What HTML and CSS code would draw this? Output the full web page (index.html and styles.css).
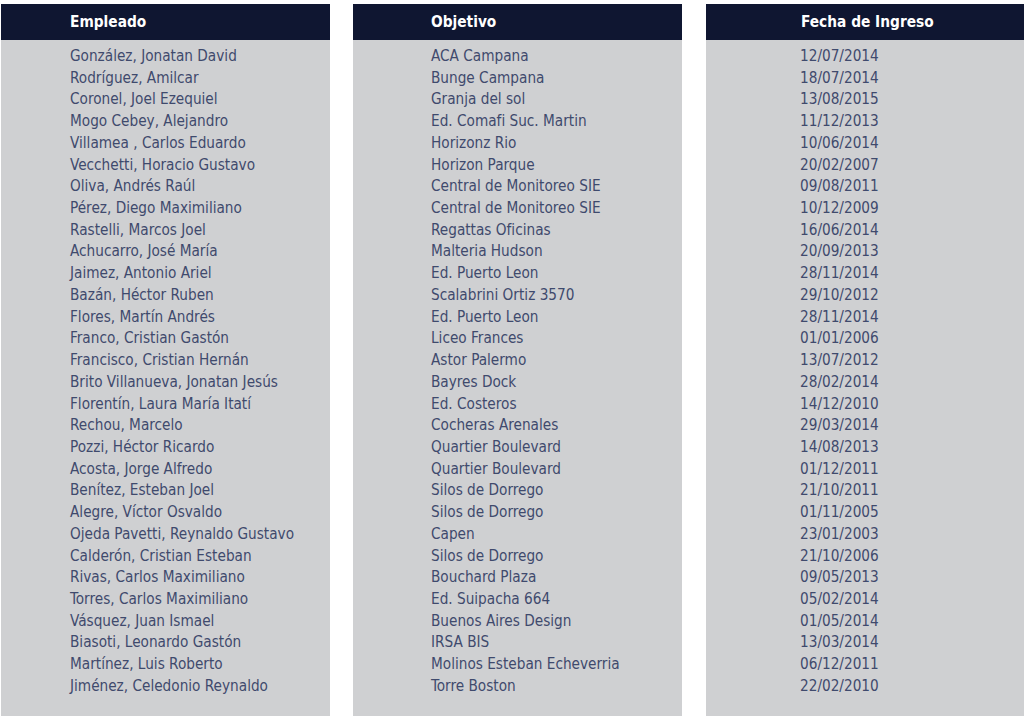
FILE: index.html
```html
<!DOCTYPE html>
<html lang="es">
<head>
<meta charset="utf-8">
<link rel="stylesheet" href="styles.css">
</head>
<body>
<div class="sheet">
  <section class="col col-emp">
    <div class="head">Empleado</div>
    <ul class="list">
      <li>González, Jonatan David</li>
      <li>Rodríguez, Amilcar</li>
      <li>Coronel, Joel Ezequiel</li>
      <li>Mogo Cebey, Alejandro</li>
      <li>Villamea , Carlos Eduardo</li>
      <li>Vecchetti, Horacio Gustavo</li>
      <li>Oliva, Andrés Raúl</li>
      <li>Pérez, Diego Maximiliano</li>
      <li>Rastelli, Marcos Joel</li>
      <li>Achucarro, José María</li>
      <li>Jaimez, Antonio Ariel</li>
      <li>Bazán, Héctor Ruben</li>
      <li>Flores, Martín Andrés</li>
      <li>Franco, Cristian Gastón</li>
      <li>Francisco, Cristian Hernán</li>
      <li>Brito Villanueva, Jonatan Jesús</li>
      <li>Florentín, Laura María Itatí</li>
      <li>Rechou, Marcelo</li>
      <li>Pozzi, Héctor Ricardo</li>
      <li>Acosta, Jorge Alfredo</li>
      <li>Benítez, Esteban Joel</li>
      <li>Alegre, Víctor Osvaldo</li>
      <li>Ojeda Pavetti, Reynaldo Gustavo</li>
      <li>Calderón, Cristian Esteban</li>
      <li>Rivas, Carlos Maximiliano</li>
      <li>Torres, Carlos Maximiliano</li>
      <li>Vásquez, Juan Ismael</li>
      <li>Biasoti, Leonardo Gastón</li>
      <li>Martínez, Luis Roberto</li>
      <li>Jiménez, Celedonio Reynaldo</li>
    </ul>
  </section>
  <section class="col col-obj">
    <div class="head">Objetivo</div>
    <ul class="list">
      <li>ACA Campana</li>
      <li>Bunge Campana</li>
      <li>Granja del sol</li>
      <li>Ed. Comafi Suc. Martin</li>
      <li>Horizonz Rio</li>
      <li>Horizon Parque</li>
      <li>Central de Monitoreo SIE</li>
      <li>Central de Monitoreo SIE</li>
      <li>Regattas Oficinas</li>
      <li>Malteria Hudson</li>
      <li>Ed. Puerto Leon</li>
      <li>Scalabrini Ortiz 3570</li>
      <li>Ed. Puerto Leon</li>
      <li>Liceo Frances</li>
      <li>Astor Palermo</li>
      <li>Bayres Dock</li>
      <li>Ed. Costeros</li>
      <li>Cocheras Arenales</li>
      <li>Quartier Boulevard</li>
      <li>Quartier Boulevard</li>
      <li>Silos de Dorrego</li>
      <li>Silos de Dorrego</li>
      <li>Capen</li>
      <li>Silos de Dorrego</li>
      <li>Bouchard Plaza</li>
      <li>Ed. Suipacha 664</li>
      <li>Buenos Aires Design</li>
      <li>IRSA BIS</li>
      <li>Molinos Esteban Echeverria</li>
      <li>Torre Boston</li>
    </ul>
  </section>
  <section class="col col-date">
    <div class="head">Fecha de Ingreso</div>
    <ul class="list">
      <li>12/07/2014</li>
      <li>18/07/2014</li>
      <li>13/08/2015</li>
      <li>11/12/2013</li>
      <li>10/06/2014</li>
      <li>20/02/2007</li>
      <li>09/08/2011</li>
      <li>10/12/2009</li>
      <li>16/06/2014</li>
      <li>20/09/2013</li>
      <li>28/11/2014</li>
      <li>29/10/2012</li>
      <li>28/11/2014</li>
      <li>01/01/2006</li>
      <li>13/07/2012</li>
      <li>28/02/2014</li>
      <li>14/12/2010</li>
      <li>29/03/2014</li>
      <li>14/08/2013</li>
      <li>01/12/2011</li>
      <li>21/10/2011</li>
      <li>01/11/2005</li>
      <li>23/01/2003</li>
      <li>21/10/2006</li>
      <li>09/05/2013</li>
      <li>05/02/2014</li>
      <li>01/05/2014</li>
      <li>13/03/2014</li>
      <li>06/12/2011</li>
      <li>22/02/2010</li>
    </ul>
  </section>
</div>
</body>
</html>
```
FILE: styles.css
```css
html, body {
  margin: 0;
  padding: 0;
  background: #ffffff;
  overflow: hidden;
}
body {
  width: 1024px;
  height: 717px;
  font-family: "DejaVu Sans Condensed", "DejaVu Sans", sans-serif;
}
.sheet {
  display: flex;
  gap: 23px;
  padding: 4px 0 0 1px;
  height: 712px;
}
.col {
  flex: 0 0 329px;
  width: 329px;
  height: 712px;
  background: #cfd0d2;
  display: flex;
  flex-direction: column;
}
.col-date {
  margin-left: 1px;
}
.head {
  height: 36px;
  background: #0f1631;
  color: #ffffff;
  font-weight: bold;
  font-size: 15.3px;
  line-height: 37px;
}
.list {
  list-style: none;
  margin: 0;
  padding: 6px 0 0 0;
  color: #3f4a6d;
  font-size: 15.2px;
  line-height: 21.72px;
}
.col-emp .head, .col-emp .list { padding-left: 69px; }
.col-obj .head, .col-obj .list { padding-left: 78px; }
.col-date .head { padding-left: 95px; }
.col-date .list { padding-left: 94px; }
```
